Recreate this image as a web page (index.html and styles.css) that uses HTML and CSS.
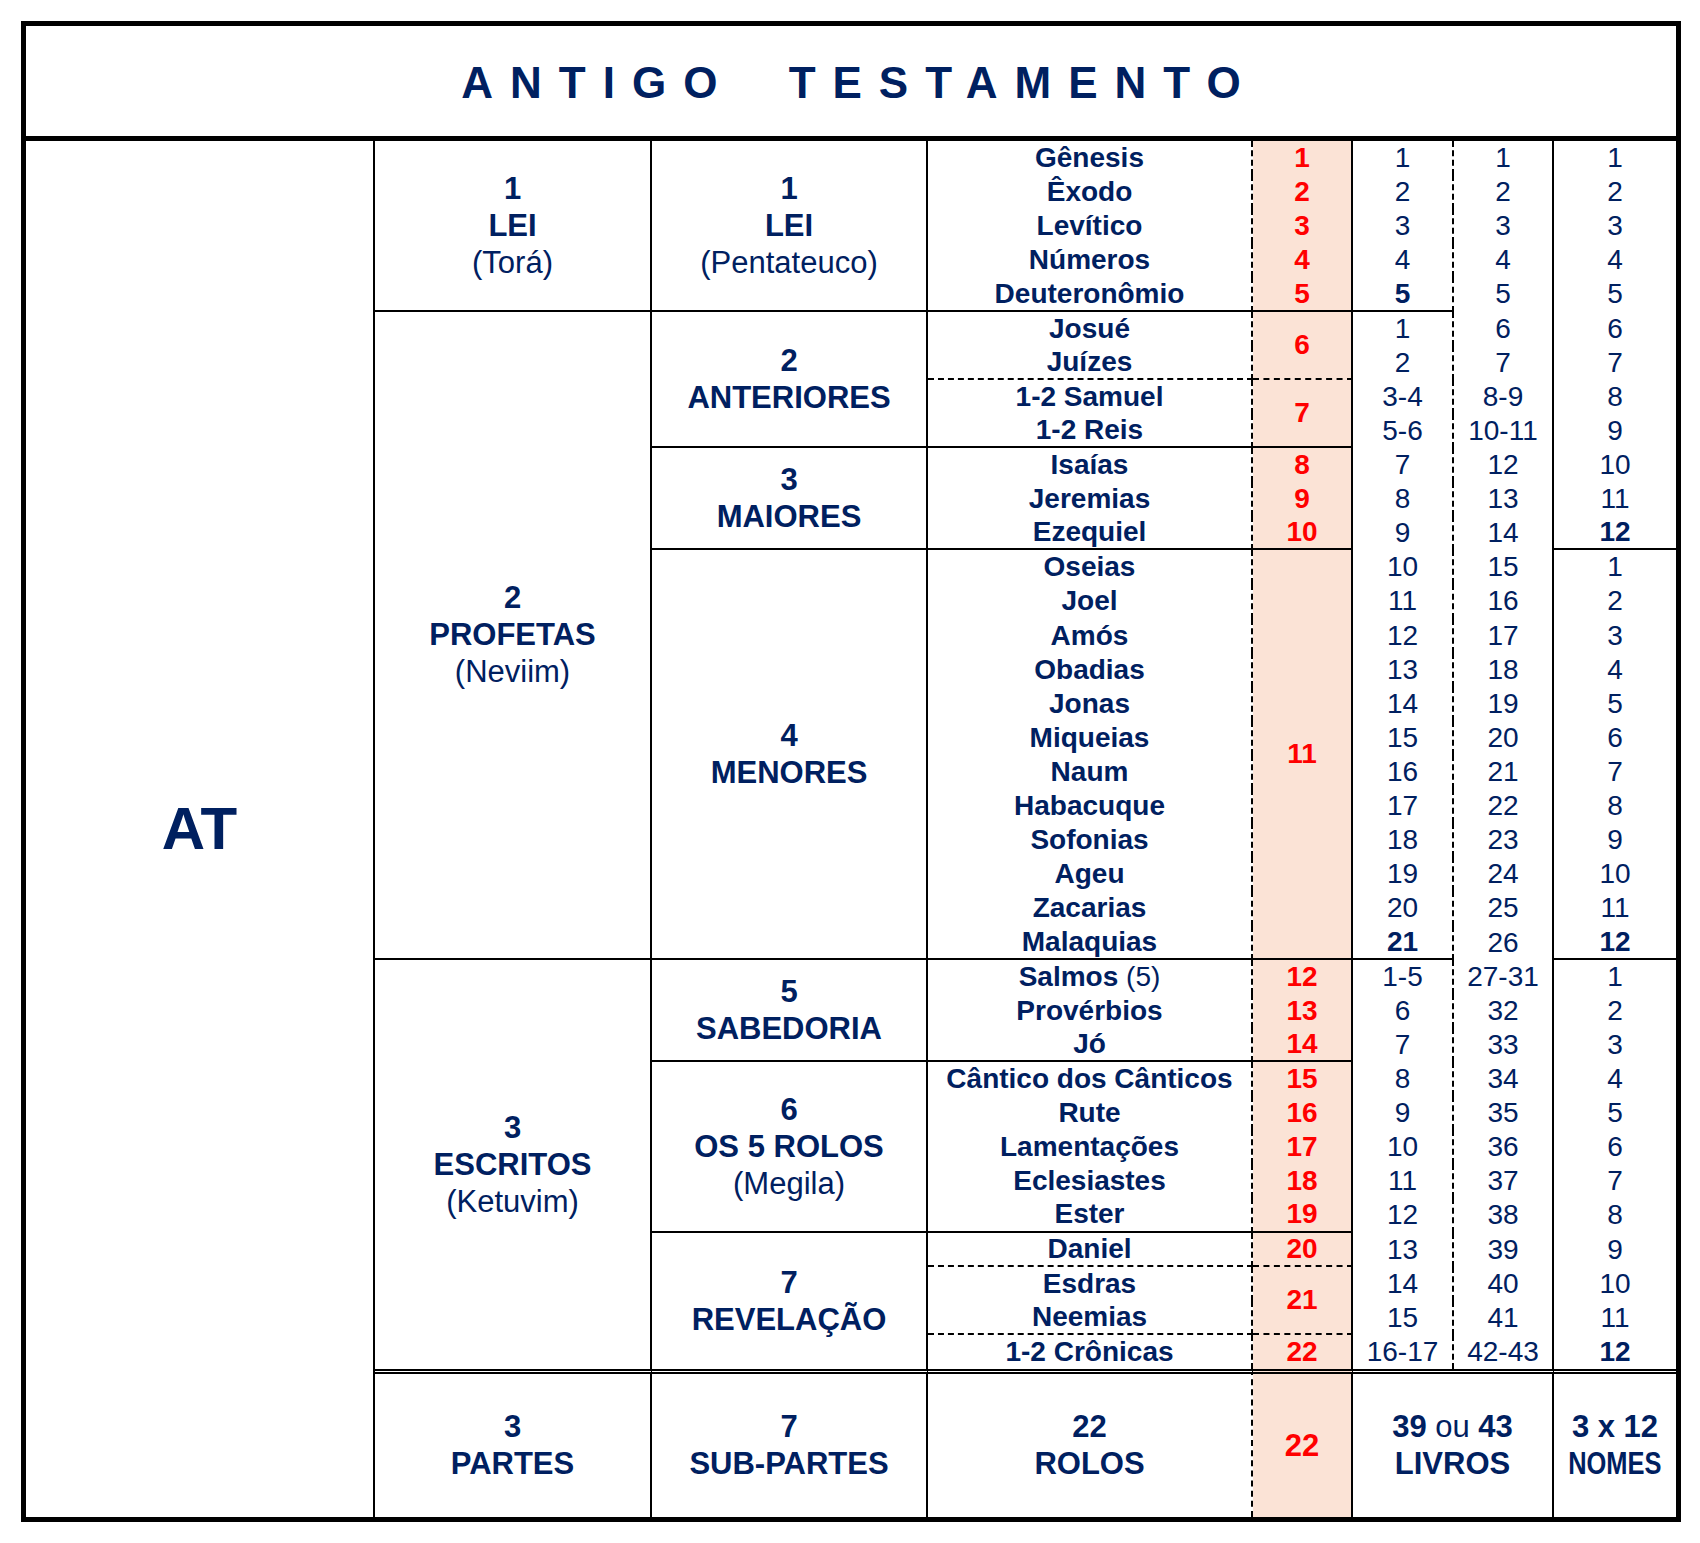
FILE: index.html
```html
<!DOCTYPE html>
<html lang="pt">
<head>
<meta charset="utf-8">
<title>Antigo Testamento</title>
<link rel="stylesheet" href="styles.css">
</head>
<body>
<div class="sheet">
  <div class="title">ANTIGO TESTAMENTO</div>
  <div class="grid">
    <!-- row 1 -->
    <div class="c1 s37 at">AT</div>
    <div class="c2 s5 bb head"><b>1</b><b>LEI</b><span>(Torá)</span></div>
    <div class="c3 s5 bb head"><b>1</b><b>LEI</b><span>(Pentateuco)</span></div>
    <div class="c4 bk">Gênesis</div><div class="c5 red">1</div><div class="c6 n">1</div><div class="c7 n">1</div><div class="c8 n">1</div>
    <!-- row 2 -->
    <div class="c4 bk">Êxodo</div><div class="c5 red">2</div><div class="c6 n">2</div><div class="c7 n">2</div><div class="c8 n">2</div>
    <!-- row 3 -->
    <div class="c4 bk">Levítico</div><div class="c5 red">3</div><div class="c6 n">3</div><div class="c7 n">3</div><div class="c8 n">3</div>
    <!-- row 4 -->
    <div class="c4 bk">Números</div><div class="c5 red">4</div><div class="c6 n">4</div><div class="c7 n">4</div><div class="c8 n">4</div>
    <!-- row 5 -->
    <div class="c4 bk bb">Deuteronômio</div><div class="c5 red bb">5</div><div class="c6 n b bb">5</div><div class="c7 n">5</div><div class="c8 n">5</div>
    <!-- row 6 -->
    <div class="c2 s19 bb head"><b>2</b><b>PROFETAS</b><span>(Neviim)</span></div>
    <div class="c3 s4 bb head"><b>2</b><b>ANTERIORES</b></div>
    <div class="c4 bk">Josué</div><div class="c5 s2 red bd">6</div><div class="c6 n">1</div><div class="c7 n">6</div><div class="c8 n">6</div>
    <!-- row 7 -->
    <div class="c4 bk bd">Juízes</div><div class="c6 n">2</div><div class="c7 n">7</div><div class="c8 n">7</div>
    <!-- row 8 -->
    <div class="c4 bk">1-2 Samuel</div><div class="c5 s2 red bb">7</div><div class="c6 n">3-4</div><div class="c7 n">8-9</div><div class="c8 n">8</div>
    <!-- row 9 -->
    <div class="c4 bk bb">1-2 Reis</div><div class="c6 n">5-6</div><div class="c7 n">10-11</div><div class="c8 n">9</div>
    <!-- row 10 -->
    <div class="c3 s3 bb head"><b>3</b><b>MAIORES</b></div>
    <div class="c4 bk">Isaías</div><div class="c5 red">8</div><div class="c6 n">7</div><div class="c7 n">12</div><div class="c8 n">10</div>
    <!-- row 11 -->
    <div class="c4 bk">Jeremias</div><div class="c5 red">9</div><div class="c6 n">8</div><div class="c7 n">13</div><div class="c8 n">11</div>
    <!-- row 12 -->
    <div class="c4 bk bb">Ezequiel</div><div class="c5 red bb">10</div><div class="c6 n">9</div><div class="c7 n">14</div><div class="c8 n b bb">12</div>
    <!-- row 13 -->
    <div class="c3 s12 bb head"><b>4</b><b>MENORES</b></div>
    <div class="c4 bk">Oseias</div><div class="c5 s12 red bb">11</div><div class="c6 n">10</div><div class="c7 n">15</div><div class="c8 n">1</div>
    <!-- row 14 -->
    <div class="c4 bk">Joel</div><div class="c6 n">11</div><div class="c7 n">16</div><div class="c8 n">2</div>
    <!-- row 15 -->
    <div class="c4 bk">Amós</div><div class="c6 n">12</div><div class="c7 n">17</div><div class="c8 n">3</div>
    <!-- row 16 -->
    <div class="c4 bk">Obadias</div><div class="c6 n">13</div><div class="c7 n">18</div><div class="c8 n">4</div>
    <!-- row 17 -->
    <div class="c4 bk">Jonas</div><div class="c6 n">14</div><div class="c7 n">19</div><div class="c8 n">5</div>
    <!-- row 18 -->
    <div class="c4 bk">Miqueias</div><div class="c6 n">15</div><div class="c7 n">20</div><div class="c8 n">6</div>
    <!-- row 19 -->
    <div class="c4 bk">Naum</div><div class="c6 n">16</div><div class="c7 n">21</div><div class="c8 n">7</div>
    <!-- row 20 -->
    <div class="c4 bk">Habacuque</div><div class="c6 n">17</div><div class="c7 n">22</div><div class="c8 n">8</div>
    <!-- row 21 -->
    <div class="c4 bk">Sofonias</div><div class="c6 n">18</div><div class="c7 n">23</div><div class="c8 n">9</div>
    <!-- row 22 -->
    <div class="c4 bk">Ageu</div><div class="c6 n">19</div><div class="c7 n">24</div><div class="c8 n">10</div>
    <!-- row 23 -->
    <div class="c4 bk">Zacarias</div><div class="c6 n">20</div><div class="c7 n">25</div><div class="c8 n">11</div>
    <!-- row 24 -->
    <div class="c4 bk bb">Malaquias</div><div class="c6 n b bb">21</div><div class="c7 n">26</div><div class="c8 n b bb">12</div>
    <!-- row 25 -->
    <div class="c2 s12 head"><b>3</b><b>ESCRITOS</b><span>(Ketuvim)</span></div>
    <div class="c3 s3 bb head"><b>5</b><b>SABEDORIA</b></div>
    <div class="c4 bk"><span>Salmos <span class="reg">(5)</span></span></div><div class="c5 red">12</div><div class="c6 n">1-5</div><div class="c7 n">27-31</div><div class="c8 n">1</div>
    <!-- row 26 -->
    <div class="c4 bk">Provérbios</div><div class="c5 red">13</div><div class="c6 n">6</div><div class="c7 n">32</div><div class="c8 n">2</div>
    <!-- row 27 -->
    <div class="c4 bk bb">Jó</div><div class="c5 red bb">14</div><div class="c6 n">7</div><div class="c7 n">33</div><div class="c8 n">3</div>
    <!-- row 28 -->
    <div class="c3 s5 bb head"><b>6</b><b>OS 5 ROLOS</b><span>(Megila)</span></div>
    <div class="c4 bk">Cântico dos Cânticos</div><div class="c5 red">15</div><div class="c6 n">8</div><div class="c7 n">34</div><div class="c8 n">4</div>
    <!-- row 29 -->
    <div class="c4 bk">Rute</div><div class="c5 red">16</div><div class="c6 n">9</div><div class="c7 n">35</div><div class="c8 n">5</div>
    <!-- row 30 -->
    <div class="c4 bk">Lamentações</div><div class="c5 red">17</div><div class="c6 n">10</div><div class="c7 n">36</div><div class="c8 n">6</div>
    <!-- row 31 -->
    <div class="c4 bk">Eclesiastes</div><div class="c5 red">18</div><div class="c6 n">11</div><div class="c7 n">37</div><div class="c8 n">7</div>
    <!-- row 32 -->
    <div class="c4 bk bb">Ester</div><div class="c5 red bb">19</div><div class="c6 n">12</div><div class="c7 n">38</div><div class="c8 n">8</div>
    <!-- row 33 -->
    <div class="c3 s4 head"><b>7</b><b>REVELAÇÃO</b></div>
    <div class="c4 bk bd">Daniel</div><div class="c5 red bd">20</div><div class="c6 n">13</div><div class="c7 n">39</div><div class="c8 n">9</div>
    <!-- row 34 -->
    <div class="c4 bk">Esdras</div><div class="c5 s2 red bd">21</div><div class="c6 n">14</div><div class="c7 n">40</div><div class="c8 n">10</div>
    <!-- row 35 -->
    <div class="c4 bk bd">Neemias</div><div class="c6 n">15</div><div class="c7 n">41</div><div class="c8 n">11</div>
    <!-- row 36 -->
    <div class="c4 bk">1-2 Crônicas</div><div class="c5 red">22</div><div class="c6 n">16-17</div><div class="c7 n">42-43</div><div class="c8 n b">12</div>
    <!-- footer -->
    <div class="c2 ft"><b>3</b><b>PARTES</b></div>
    <div class="c3 ft"><b>7</b><b>SUB-PARTES</b></div>
    <div class="c4 ft"><b>22</b><b>ROLOS</b></div>
    <div class="c5 ft red">22</div>
    <div class="c67 ft"><b>39 <span class="reg">ou</span> 43</b><b>LIVROS</b></div>
    <div class="c8 ft"><b>3 x 12</b><b class="narrow">NOMES</b></div>
  </div>
</div>
</body>
</html>
```
FILE: styles.css
```css
body {
  margin: 0;
  background: #ffffff;
  font-family: "Liberation Sans", Arial, sans-serif;
  color: #002060;
}

.sheet {
  margin: 21px;
  width: 1650px;
  border: 5px solid #000;
}

.title {
  box-sizing: border-box;
  height: 115px;
  border-bottom: 5px solid #000;
  display: flex;
  align-items: center;
  justify-content: center;
  padding: 4px 0 0 17px;
  font-size: 44px;
  font-weight: bold;
  letter-spacing: 17px;
  word-spacing: 25px;
}

.grid {
  display: grid;
  grid-template-columns: 349px 277px 276px 325px 100px 101px 100px 122px;
  grid-template-rows: repeat(36, 34.111px) 148px;
}

.grid > div {
  box-sizing: border-box;
  display: flex;
  flex-direction: column;
  align-items: center;
  justify-content: center;
  text-align: center;
  white-space: nowrap;
}

.c1 { grid-column: 1; border-right: 2px solid #000; }
.c2 { grid-column: 2; border-right: 2px solid #000; }
.c3 { grid-column: 3; border-right: 2px solid #000; }
.c4 { grid-column: 4; border-right: 2px dashed #000; }
.c5 { grid-column: 5; border-right: 2px solid #000; }
.c6 { grid-column: 6; border-right: 2px dashed #000; }
.c7 { grid-column: 7; border-right: 2px solid #000; }
.c8 { grid-column: 8; }
.c67 { grid-column: 6 / span 2; border-right: 2px solid #000; }

.s2 { grid-row: span 2; }
.s3 { grid-row: span 3; }
.s4 { grid-row: span 4; }
.s5 { grid-row: span 5; }
.s12 { grid-row: span 12; }
.s19 { grid-row: span 19; }
.s37 { grid-row: span 37; }

.bb { border-bottom: 2px solid #000; }
.bd { border-bottom: 2px dashed #000; }

.at {
  font-size: 60px;
  font-weight: bold;
}

.head {
  font-size: 31px;
  line-height: 37px;
}

.head b { font-weight: bold; }
.head span { font-weight: normal; }

.bk {
  font-size: 28px;
  font-weight: bold;
  line-height: 34px;
}

.reg { font-weight: normal; }

.n {
  font-size: 28px;
  line-height: 34px;
}

.b { font-weight: bold; }

.red {
  background: #fbe3d6;
  color: #ff0000;
  font-size: 28px;
  font-weight: bold;
  line-height: 34px;
}

.ft {
  border-top: 5px double #000;
  font-size: 31px;
  line-height: 37px;
  font-weight: bold;
}

.narrow {
  display: inline-block;
  transform: scaleX(0.82);
}
```
